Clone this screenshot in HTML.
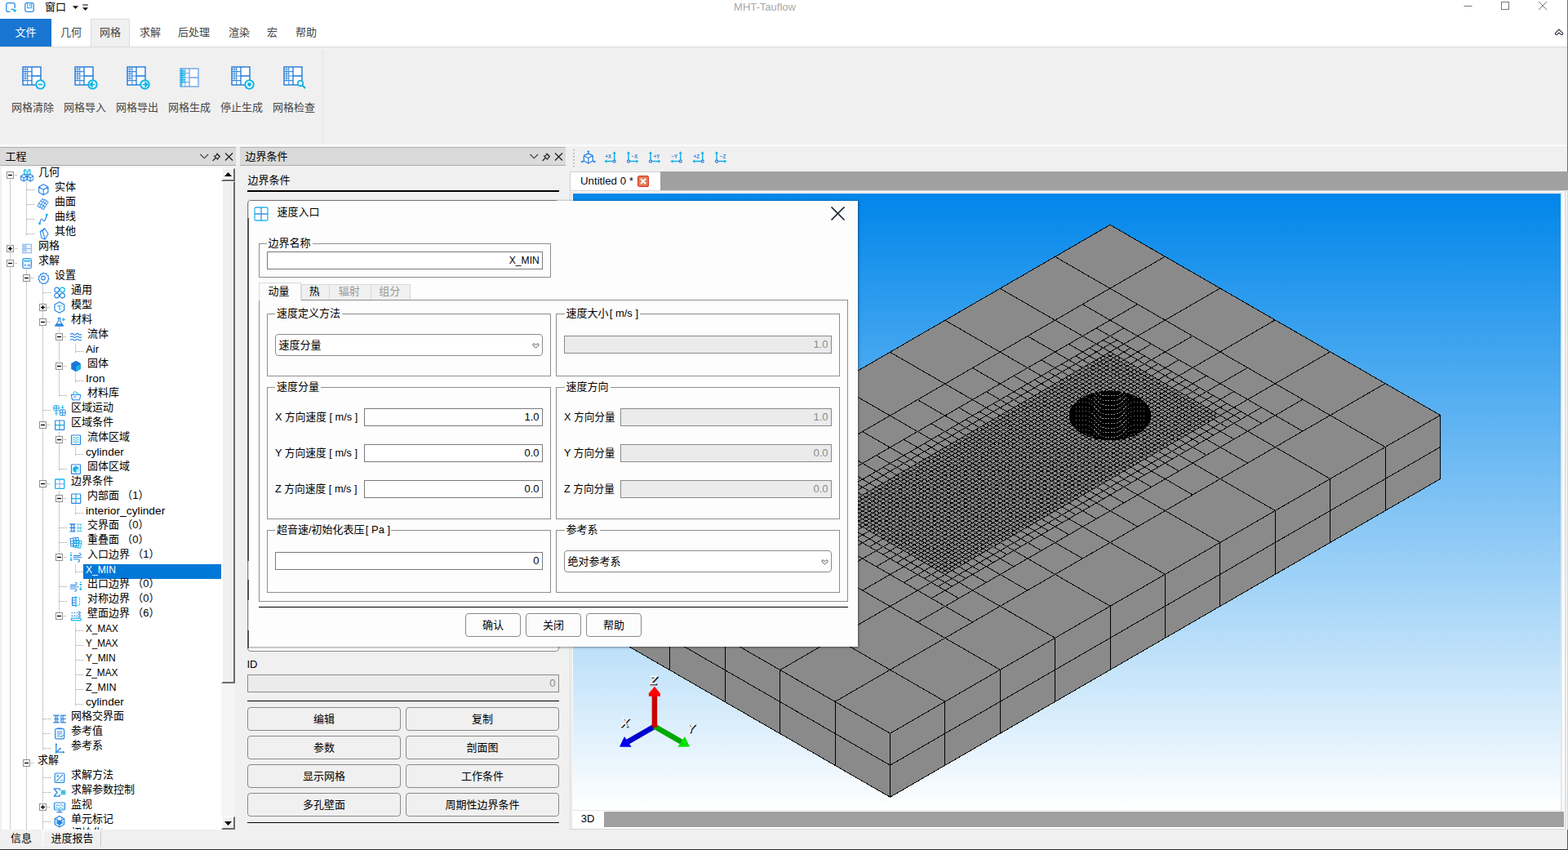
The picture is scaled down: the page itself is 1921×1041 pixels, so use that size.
<!DOCTYPE html>
<html lang="zh"><head><meta charset="utf-8"><title>MHT-Tauflow</title><style>html,body{margin:0;padding:0}body{width:1921px;height:1041px;overflow:hidden;background:#f0f0f0;font-family:"Liberation Sans","Noto Sans CJK SC",sans-serif;font-size:13px;position:relative}
div{position:absolute;box-sizing:border-box}
.sp{display:block;flex:none;width:3.3px;height:1px}.sp1{display:block;flex:none;width:1.2px;height:1px}
.t{display:flex;align-items:center;white-space:pre}
</style></head><body>
<div style="left:0px;top:181px;width:1921px;height:860px;background:#f0f0f0"></div>
<div style="left:0px;top:180px;width:289px;height:23px;background:#dadada;border-top:1px solid #b4b4b4;border-bottom:1px solid #acacac"></div>
<div class="t" style="top:181.5px;height:20px;line-height:20px;font-size:13px;color:#000;left:6.5px;">工程</div>
<svg style="position:absolute;left:244px;top:185px" width="46" height="14" viewBox="0 0 46 14"><path d="M1.5 4l4.8 4.8l4.8-4.8" fill="none" stroke="#333" stroke-width="1.1"/><path d="M16.6 12l3.8-3.8M18 5.6l5 5M19.3 6.8l2.9-3l3 3l-2.9 3M21.5 2.8l4.2 4.2" fill="none" stroke="#2a2a2a" stroke-width="1.25"/><path d="M32 2.5l9 9M41 2.5l-9 9" stroke="#222" stroke-width="1.3"/></svg>
<div class="tree" style="left:2px;top:205px;width:269px;height:811px;background:#fff"></div>
<div style="left:0px;top:203px;width:290px;height:2px;background:#f4f4f4"></div>
<div style="left:271px;top:205px;width:17px;height:811px;background:#f4f4f4"></div>
<div style="left:271px;top:206px;width:17px;height:16px;background:#f0f0f0;border-right:2px solid #6b6b6b;border-bottom:2px solid #6b6b6b;border-left:2px solid #fff;border-top:1px solid #fff"></div>
<svg style="position:absolute;left:274.5px;top:211px" width="9" height="5" viewBox="0 0 9 5"><path d="M0 5l4.5-5l4.5 5z" fill="#000"/></svg>
<div style="left:271px;top:222px;width:17px;height:615px;background:#f0f0f0;border-right:2px solid #6b6b6b;border-bottom:2px solid #6b6b6b;border-left:2px solid #fff;border-top:1px solid #fff"></div>
<div style="left:271px;top:837px;width:17px;height:163px;background:repeating-conic-gradient(#fff 0 25%,#ececec 0 50%) 0 0/2px 2px"></div>
<div style="left:271px;top:1000px;width:17px;height:16px;background:#f0f0f0;border-right:2px solid #6b6b6b;border-bottom:2px solid #6b6b6b;border-left:2px solid #fff;border-top:1px solid #fff"></div>
<svg style="position:absolute;left:274.5px;top:1006px" width="9" height="5" viewBox="0 0 9 5"><path d="M0 0l4.5 5l4.5-5z" fill="#000"/></svg>
<div style="left:12px;top:219.5px;width:1px;height:796.5px;background:repeating-linear-gradient(180deg,#9a9a9a 0 1px,transparent 1px 2px)"></div>
<div style="left:32px;top:222.5px;width:1px;height:65px;background:repeating-linear-gradient(180deg,#9a9a9a 0 1px,transparent 1px 2px)"></div>
<div style="left:32px;top:330.5px;width:1px;height:685.5px;background:repeating-linear-gradient(180deg,#9a9a9a 0 1px,transparent 1px 2px)"></div>
<div style="left:52px;top:348.5px;width:1px;height:569px;background:repeating-linear-gradient(180deg,#9a9a9a 0 1px,transparent 1px 2px)"></div>
<div style="left:52px;top:939.5px;width:1px;height:76.5px;background:repeating-linear-gradient(180deg,#9a9a9a 0 1px,transparent 1px 2px)"></div>
<div style="left:72px;top:399.5px;width:1px;height:86px;background:repeating-linear-gradient(180deg,#9a9a9a 0 1px,transparent 1px 2px)"></div>
<div style="left:72px;top:528.5px;width:1px;height:47px;background:repeating-linear-gradient(180deg,#9a9a9a 0 1px,transparent 1px 2px)"></div>
<div style="left:72px;top:600.5px;width:1px;height:155px;background:repeating-linear-gradient(180deg,#9a9a9a 0 1px,transparent 1px 2px)"></div>
<div style="left:92px;top:420.5px;width:1px;height:11px;background:repeating-linear-gradient(180deg,#9a9a9a 0 1px,transparent 1px 2px)"></div>
<div style="left:92px;top:456.5px;width:1px;height:11px;background:repeating-linear-gradient(180deg,#9a9a9a 0 1px,transparent 1px 2px)"></div>
<div style="left:92px;top:546.5px;width:1px;height:11px;background:repeating-linear-gradient(180deg,#9a9a9a 0 1px,transparent 1px 2px)"></div>
<div style="left:92px;top:618.5px;width:1px;height:11px;background:repeating-linear-gradient(180deg,#9a9a9a 0 1px,transparent 1px 2px)"></div>
<div style="left:92px;top:690.5px;width:1px;height:11px;background:repeating-linear-gradient(180deg,#9a9a9a 0 1px,transparent 1px 2px)"></div>
<div style="left:92px;top:762.5px;width:1px;height:101px;background:repeating-linear-gradient(180deg,#9a9a9a 0 1px,transparent 1px 2px)"></div>
<svg style="position:absolute;left:7.5px;top:210px" width="9" height="9" viewBox="0 0 9 9"><rect x=".5" y=".5" width="8" height="8" fill="#fff" stroke="#919191"/><path d="M2 4.5h5" stroke="#000" stroke-width="1.4"/></svg>
<div style="left:18px;top:214px;width:4px;height:1px;background:repeating-linear-gradient(90deg,#9a9a9a 0 1px,transparent 1px 2px)"></div>
<svg style="position:absolute;left:25px;top:206.5px" width="16" height="16" viewBox="0 0 16 16"><path d="M8.3 -0.7L12 1.3V5.3L8.3 7.3L4.6 5.3V1.3ZM4.6 1.3L8.3 3.3L12 1.3M8.3 3.3V7.3" fill="none" stroke="#12b4e6" stroke-width="1.1" stroke-linejoin="round" stroke-linecap="round"/><path d="M4.2 6.6L7.9 8.7V12.9L4.2 15L0.5 12.9V8.7ZM0.5 8.7L4.2 10.8L7.9 8.7M4.2 10.8V15M12.2 6.6L15.9 8.7V12.9L12.2 15L8.5 12.9V8.7ZM8.5 8.7L12.2 10.8L15.9 8.7M12.2 10.8V15" fill="none" stroke="#2a86e4" stroke-width="1.1" stroke-linejoin="round" stroke-linecap="round"/></svg>
<div class="t" style="top:201.3px;height:20px;line-height:20px;font-size:13px;color:#000;left:47px;">几何</div>
<div style="left:33px;top:232px;width:8.5px;height:1px;background:repeating-linear-gradient(90deg,#9a9a9a 0 1px,transparent 1px 2px)"></div>
<svg style="position:absolute;left:45px;top:224.5px" width="16" height="16" viewBox="0 0 16 16"><path d="M8.2 0.8L13.9 4.05V10.55L8.2 13.8L2.5 10.55V4.05ZM2.5 4.05L8.2 7.3L13.9 4.05M8.2 7.3V13.8" fill="none" stroke="#2a86e4" stroke-width="1.2" stroke-linejoin="round" stroke-linecap="round"/></svg>
<div class="t" style="top:219.3px;height:20px;line-height:20px;font-size:13px;color:#000;left:67px;">实体</div>
<div style="left:33px;top:250px;width:8.5px;height:1px;background:repeating-linear-gradient(90deg,#9a9a9a 0 1px,transparent 1px 2px)"></div>
<svg style="position:absolute;left:45px;top:242.5px" width="16" height="16" viewBox="0 0 16 16"><path d="M6.9 .8Q11.5 1.2 14.2 4.6Q10.5 8 8.3 13.9Q5.5 10.5 1.1 9.8Q2.5 4.5 6.9 .8ZM4.9 3.5Q9.5 4.2 12.1 7.6M3 6.5Q7.5 7.3 10.1 10.7M9.5 2Q6 5.5 3.6 11M12 3.2Q8.5 6.5 6.2 12.3" fill="none" stroke="#2a86e4" stroke-width="1" stroke-linejoin="round" stroke-linecap="round"/></svg>
<div class="t" style="top:237.3px;height:20px;line-height:20px;font-size:13px;color:#000;left:67px;">曲面</div>
<div style="left:33px;top:268px;width:8.5px;height:1px;background:repeating-linear-gradient(90deg,#9a9a9a 0 1px,transparent 1px 2px)"></div>
<svg style="position:absolute;left:45px;top:260.5px" width="16" height="16" viewBox="0 0 16 16"><path d="M3.5 12.8C5.5 4.5 7 7.5 8 9C9.5 11 11 8 12.3 2" fill="none" stroke="#2a86e4" stroke-width="1.2" stroke-linejoin="round" stroke-linecap="round"/><circle cx="12.3" cy="2" r="1.5" fill="#12b4e6"/><circle cx="3.5" cy="12.8" r="1.5" fill="#12b4e6"/></svg>
<div class="t" style="top:255.3px;height:20px;line-height:20px;font-size:13px;color:#000;left:67px;">曲线</div>
<div style="left:33px;top:286px;width:8.5px;height:1px;background:repeating-linear-gradient(90deg,#9a9a9a 0 1px,transparent 1px 2px)"></div>
<svg style="position:absolute;left:45px;top:278.5px" width="16" height="16" viewBox="0 0 16 16"><path d="M4.2 4.5L9.8 .8L14 7.5L10 14.2L5.8 12.5ZM4.2 4.5L7.2 3.5L10 14.2M7.2 3.5L9.8 .8" fill="none" stroke="#2a86e4" stroke-width="1.1" stroke-linejoin="round" stroke-linecap="round"/></svg>
<div class="t" style="top:273.3px;height:20px;line-height:20px;font-size:13px;color:#000;left:67px;">其他</div>
<svg style="position:absolute;left:7.5px;top:300px" width="9" height="9" viewBox="0 0 9 9"><rect x=".5" y=".5" width="8" height="8" fill="#fff" stroke="#919191"/><path d="M2 4.5h5M4.5 2v5" stroke="#000" stroke-width="1.4"/></svg>
<div style="left:18px;top:304px;width:4px;height:1px;background:repeating-linear-gradient(90deg,#9a9a9a 0 1px,transparent 1px 2px)"></div>
<svg style="position:absolute;left:25px;top:296.5px" width="16" height="16" viewBox="0 0 16 16"><rect x="2.8" y="2.2" width="10.6" height="10.6" fill="#eaf2fd" stroke="#8fb8ee" stroke-width="1.1"/><path d="M6.8 2.2v10.6M6.8 7.5h6.6M2.8 5h4M2.8 7.5h4M2.8 10h4M4.8 2.2v8" stroke="#8fb8ee" stroke-width="1" fill="none"/></svg>
<div class="t" style="top:291.3px;height:20px;line-height:20px;font-size:13px;color:#000;left:47px;">网格</div>
<svg style="position:absolute;left:7.5px;top:318px" width="9" height="9" viewBox="0 0 9 9"><rect x=".5" y=".5" width="8" height="8" fill="#fff" stroke="#919191"/><path d="M2 4.5h5" stroke="#000" stroke-width="1.4"/></svg>
<div style="left:18px;top:322px;width:4px;height:1px;background:repeating-linear-gradient(90deg,#9a9a9a 0 1px,transparent 1px 2px)"></div>
<svg style="position:absolute;left:25px;top:314.5px" width="16" height="16" viewBox="0 0 16 16"><rect x="2.9" y="1.5" width="10.4" height="12" rx="1.8" fill="none" stroke="#2a86e4" stroke-width="1.2" stroke-linejoin="round" stroke-linecap="round"/><rect x="5" y="3.7" width="6.2" height="1.6" fill="none" stroke="#12b4e6" stroke-width="1"/><path d="M4.8 8.7l2 2M6.8 8.7l-2 2M9 9h2.6M9 10.6h2.6" fill="none" stroke="#2a86e4" stroke-width="0.9" stroke-linejoin="round" stroke-linecap="round"/></svg>
<div class="t" style="top:309.3px;height:20px;line-height:20px;font-size:13px;color:#000;left:47px;">求解</div>
<svg style="position:absolute;left:27.5px;top:336px" width="9" height="9" viewBox="0 0 9 9"><rect x=".5" y=".5" width="8" height="8" fill="#fff" stroke="#919191"/><path d="M2 4.5h5" stroke="#000" stroke-width="1.4"/></svg>
<div style="left:38px;top:340px;width:4px;height:1px;background:repeating-linear-gradient(90deg,#9a9a9a 0 1px,transparent 1px 2px)"></div>
<svg style="position:absolute;left:45px;top:332.5px" width="16" height="16" viewBox="0 0 16 16"><path d="M8 .9l1.6 1.4l2.1-.4l.7 2l2 .8l-.5 2.1l1.3 1.6l-1.5 1.5l.2 2.1l-2 .6l-1 1.9l-2-.6l-1.9.9l-1.2-1.7l-2.1-.3l-.1-2.1l-1.6-1.4l1-1.9l-.6-2l1.9-.9l.6-2l2.1.2z" fill="none" stroke="#2a86e4" stroke-width="1.1" stroke-linejoin="round" stroke-linecap="round"/><circle cx="8" cy="7.4" r="2.3" fill="none" stroke="#2a86e4" stroke-width="1.1" stroke-linejoin="round" stroke-linecap="round"/></svg>
<div class="t" style="top:327.3px;height:20px;line-height:20px;font-size:13px;color:#000;left:67px;">设置</div>
<div style="left:53px;top:358px;width:8.5px;height:1px;background:repeating-linear-gradient(90deg,#9a9a9a 0 1px,transparent 1px 2px)"></div>
<svg style="position:absolute;left:65px;top:350.5px" width="16" height="16" viewBox="0 0 16 16"><circle cx="4.6" cy="4" r="2.9" fill="none" stroke="#2a86e4" stroke-width="1.2" stroke-linejoin="round" stroke-linecap="round"/><circle cx="11.4" cy="4" r="2.9" fill="none" stroke="#12b4e6" stroke-width="1.2" stroke-linejoin="round" stroke-linecap="round"/><circle cx="4.6" cy="11" r="2.9" fill="none" stroke="#2a86e4" stroke-width="1.2" stroke-linejoin="round" stroke-linecap="round"/><circle cx="11.4" cy="11" r="2.9" fill="none" stroke="#2a86e4" stroke-width="1.2" stroke-linejoin="round" stroke-linecap="round"/></svg>
<div class="t" style="top:345.3px;height:20px;line-height:20px;font-size:13px;color:#000;left:87px;">通用</div>
<svg style="position:absolute;left:47.5px;top:372px" width="9" height="9" viewBox="0 0 9 9"><rect x=".5" y=".5" width="8" height="8" fill="#fff" stroke="#919191"/><path d="M2 4.5h5M4.5 2v5" stroke="#000" stroke-width="1.4"/></svg>
<div style="left:58px;top:376px;width:4px;height:1px;background:repeating-linear-gradient(90deg,#9a9a9a 0 1px,transparent 1px 2px)"></div>
<svg style="position:absolute;left:65px;top:368.5px" width="16" height="16" viewBox="0 0 16 16"><path d="M7.8 0.7L13.6 4.1V10.9L7.8 14.3L2 10.9V4.1Z" fill="none" stroke="#2a86e4" stroke-width="1.2" stroke-linejoin="round" stroke-linecap="round"/><path d="M5.6 5.8h4.6M7.8 5.8v3.2q0 1.2 1.5 1" fill="none" stroke="#12b4e6" stroke-width="1.1" stroke-linejoin="round" stroke-linecap="round"/></svg>
<div class="t" style="top:363.3px;height:20px;line-height:20px;font-size:13px;color:#000;left:87px;">模型</div>
<svg style="position:absolute;left:47.5px;top:390px" width="9" height="9" viewBox="0 0 9 9"><rect x=".5" y=".5" width="8" height="8" fill="#fff" stroke="#919191"/><path d="M2 4.5h5" stroke="#000" stroke-width="1.4"/></svg>
<div style="left:58px;top:394px;width:4px;height:1px;background:repeating-linear-gradient(90deg,#9a9a9a 0 1px,transparent 1px 2px)"></div>
<svg style="position:absolute;left:65px;top:386.5px" width="16" height="16" viewBox="0 0 16 16"><path d="M6 2.6h3.2M6.6 2.6v3.6L2.6 12h10l-4-5.8v-3.6" fill="none" stroke="#2a86e4" stroke-width="1.1" stroke-linejoin="round" stroke-linecap="round"/><path d="M4.2 9.8h6.8l1.6 2.3h-10z" fill="#2a86e4" stroke="#2a86e4" stroke-width=".8"/><path d="M12.8 2.5v3.4M11.1 4.2h3.4" fill="none" stroke="#12b4e6" stroke-width="1.1" stroke-linejoin="round" stroke-linecap="round"/></svg>
<div class="t" style="top:381.3px;height:20px;line-height:20px;font-size:13px;color:#000;left:87px;">材料</div>
<svg style="position:absolute;left:67.5px;top:408px" width="9" height="9" viewBox="0 0 9 9"><rect x=".5" y=".5" width="8" height="8" fill="#fff" stroke="#919191"/><path d="M2 4.5h5" stroke="#000" stroke-width="1.4"/></svg>
<div style="left:78px;top:412px;width:4px;height:1px;background:repeating-linear-gradient(90deg,#9a9a9a 0 1px,transparent 1px 2px)"></div>
<svg style="position:absolute;left:85px;top:404.5px" width="16" height="16" viewBox="0 0 16 16"><path d="M1.5 4.3q1.7-1.7 3.3 0t3.3 0t3.3 0t3.3 0" fill="none" stroke="#2a86e4" stroke-width="1.2" stroke-linejoin="round" stroke-linecap="round"/><path d="M1.5 7.7q1.7-1.7 3.3 0t3.3 0t3.3 0t3.3 0" fill="none" stroke="#2a86e4" stroke-width="1.2" stroke-linejoin="round" stroke-linecap="round"/><path d="M1.5 11.1q1.7-1.7 3.3 0t3.3 0t3.3 0t3.3 0" fill="none" stroke="#2a86e4" stroke-width="1.2" stroke-linejoin="round" stroke-linecap="round"/></svg>
<div class="t" style="top:399.3px;height:20px;line-height:20px;font-size:13px;color:#000;left:107px;">流体</div>
<div style="left:93px;top:430px;width:9px;height:1px;background:repeating-linear-gradient(90deg,#9a9a9a 0 1px,transparent 1px 2px)"></div>
<div class="t" style="top:417.7px;height:20px;line-height:20px;font-size:13px;color:#000;left:105.2px;transform:scaleX(1);transform-origin:0 50%;">Air</div>
<svg style="position:absolute;left:67.5px;top:444px" width="9" height="9" viewBox="0 0 9 9"><rect x=".5" y=".5" width="8" height="8" fill="#fff" stroke="#919191"/><path d="M2 4.5h5" stroke="#000" stroke-width="1.4"/></svg>
<div style="left:78px;top:448px;width:4px;height:1px;background:repeating-linear-gradient(90deg,#9a9a9a 0 1px,transparent 1px 2px)"></div>
<svg style="position:absolute;left:85px;top:440.5px" width="16" height="16" viewBox="0 0 16 16"><path d="M8 0.7L13.8 4.1V10.9L8 14.3L2.2 10.9V4.1Z" fill="#1976dc"/><path d="M8.2 8l5.3-3v6.3l-5.3 3.1z" fill="#1ab2e8"/></svg>
<div class="t" style="top:435.3px;height:20px;line-height:20px;font-size:13px;color:#000;left:107px;">固体</div>
<div style="left:93px;top:466px;width:9px;height:1px;background:repeating-linear-gradient(90deg,#9a9a9a 0 1px,transparent 1px 2px)"></div>
<div class="t" style="top:453.7px;height:20px;line-height:20px;font-size:13px;color:#000;left:105.2px;transform:scaleX(1.05);transform-origin:0 50%;">Iron</div>
<div style="left:73px;top:484px;width:8.5px;height:1px;background:repeating-linear-gradient(90deg,#9a9a9a 0 1px,transparent 1px 2px)"></div>
<svg style="position:absolute;left:85px;top:476.5px" width="16" height="16" viewBox="0 0 16 16"><path d="M2.3 6.5h11.5l-1.3 6.3h-8.9z" fill="none" stroke="#2a86e4" stroke-width="1.1" stroke-linejoin="round" stroke-linecap="round"/><path d="M5 6.5q-1-3.5 1.5-4q2 0 2.5 2M9 4.5q1.5-1.5 3 2" fill="none" stroke="#12b4e6" stroke-width="1" stroke-linejoin="round" stroke-linecap="round"/><path d="M5.5 9h2.5" fill="none" stroke="#2a86e4" stroke-width="1" stroke-linejoin="round" stroke-linecap="round"/></svg>
<div class="t" style="top:471.3px;height:20px;line-height:20px;font-size:13px;color:#000;left:107px;">材料库</div>
<div style="left:53px;top:502px;width:8.5px;height:1px;background:repeating-linear-gradient(90deg,#9a9a9a 0 1px,transparent 1px 2px)"></div>
<svg style="position:absolute;left:65px;top:494.5px" width="16" height="16" viewBox="0 0 16 16"><rect x=".9" y="1.8" width="6.2" height="6.2" rx=".8" fill="none" stroke="#12b4e6" stroke-width="1" stroke-linejoin="round" stroke-linecap="round"/><path d="M4 1.8v6.2M.9 4.9h6.2" fill="none" stroke="#2a86e4" stroke-width="1" stroke-linejoin="round" stroke-linecap="round"/><rect x="8.4" y="7" width="6.6" height="6.6" rx=".8" fill="none" stroke="#2a86e4" stroke-width="1" stroke-linejoin="round" stroke-linecap="round"/><path d="M11.7 7v6.6M8.4 10.3h6.6" fill="none" stroke="#2a86e4" stroke-width="1" stroke-linejoin="round" stroke-linecap="round"/><path d="M11.7 1.5v3.5M10.3 3.7l1.4 1.4l1.4-1.4M4 13.5v-3.5M2.6 11.3l1.4-1.4l1.4 1.4" fill="none" stroke="#12b4e6" stroke-width="1" stroke-linejoin="round" stroke-linecap="round"/></svg>
<div class="t" style="top:489.3px;height:20px;line-height:20px;font-size:13px;color:#000;left:87px;">区域运动</div>
<svg style="position:absolute;left:47.5px;top:516px" width="9" height="9" viewBox="0 0 9 9"><rect x=".5" y=".5" width="8" height="8" fill="#fff" stroke="#919191"/><path d="M2 4.5h5" stroke="#000" stroke-width="1.4"/></svg>
<div style="left:58px;top:520px;width:4px;height:1px;background:repeating-linear-gradient(90deg,#9a9a9a 0 1px,transparent 1px 2px)"></div>
<svg style="position:absolute;left:65px;top:512.5px" width="16" height="16" viewBox="0 0 16 16"><path d="M8 2v11.4M2.5 7.7h11" fill="none" stroke="#12b4e6" stroke-width="1.2" stroke-linejoin="round" stroke-linecap="round"/><rect x="2.7" y="2" width="11" height="11.4" rx=".6" fill="none" stroke="#2a86e4" stroke-width="1.2" stroke-linejoin="round" stroke-linecap="round"/></svg>
<div class="t" style="top:507.3px;height:20px;line-height:20px;font-size:13px;color:#000;left:87px;">区域条件</div>
<svg style="position:absolute;left:67.5px;top:534px" width="9" height="9" viewBox="0 0 9 9"><rect x=".5" y=".5" width="8" height="8" fill="#fff" stroke="#919191"/><path d="M2 4.5h5" stroke="#000" stroke-width="1.4"/></svg>
<div style="left:78px;top:538px;width:4px;height:1px;background:repeating-linear-gradient(90deg,#9a9a9a 0 1px,transparent 1px 2px)"></div>
<svg style="position:absolute;left:85px;top:530.5px" width="16" height="16" viewBox="0 0 16 16"><rect x="2.5" y="2" width="11" height="11.4" rx=".6" fill="none" stroke="#2a86e4" stroke-width="1.2" stroke-linejoin="round" stroke-linecap="round"/><path d="M4.3 5.2q1.2-1.3 2.4 0t2.4 0t2.4 0" fill="none" stroke="#12b4e6" stroke-width="1" stroke-linejoin="round" stroke-linecap="round"/><path d="M4.3 7.8q1.2-1.3 2.4 0t2.4 0t2.4 0" fill="none" stroke="#12b4e6" stroke-width="1" stroke-linejoin="round" stroke-linecap="round"/><path d="M4.3 10.4q1.2-1.3 2.4 0t2.4 0t2.4 0" fill="none" stroke="#12b4e6" stroke-width="1" stroke-linejoin="round" stroke-linecap="round"/></svg>
<div class="t" style="top:525.3px;height:20px;line-height:20px;font-size:13px;color:#000;left:107px;">流体区域</div>
<div style="left:93px;top:556px;width:9px;height:1px;background:repeating-linear-gradient(90deg,#9a9a9a 0 1px,transparent 1px 2px)"></div>
<div class="t" style="top:543.7px;height:20px;line-height:20px;font-size:13px;color:#000;left:105.2px;transform:scaleX(1.045);transform-origin:0 50%;">cylinder</div>
<div style="left:73px;top:574px;width:8.5px;height:1px;background:repeating-linear-gradient(90deg,#9a9a9a 0 1px,transparent 1px 2px)"></div>
<svg style="position:absolute;left:85px;top:566.5px" width="16" height="16" viewBox="0 0 16 16"><rect x="2.5" y="2" width="11" height="11.4" rx=".6" fill="none" stroke="#2a86e4" stroke-width="1.2" stroke-linejoin="round" stroke-linecap="round"/><path d="M8 3.6L11.6 5.7V9.9L8 12L4.4 9.9V5.7Z" fill="#12b4e6"/><path d="M8.3 8.2l3-1.7v3.5l-3 1.8z" fill="#fff" opacity=".75"/></svg>
<div class="t" style="top:561.3px;height:20px;line-height:20px;font-size:13px;color:#000;left:107px;">固体区域</div>
<svg style="position:absolute;left:47.5px;top:588px" width="9" height="9" viewBox="0 0 9 9"><rect x=".5" y=".5" width="8" height="8" fill="#fff" stroke="#919191"/><path d="M2 4.5h5" stroke="#000" stroke-width="1.4"/></svg>
<div style="left:58px;top:592px;width:4px;height:1px;background:repeating-linear-gradient(90deg,#9a9a9a 0 1px,transparent 1px 2px)"></div>
<svg style="position:absolute;left:65px;top:584.5px" width="16" height="16" viewBox="0 0 16 16"><path d="M8 2v11.4M2.5 7.7h11" fill="none" stroke="#9db4ee" stroke-width="1.2" stroke-linejoin="round" stroke-linecap="round"/><rect x="2.7" y="2" width="11" height="11.4" rx=".6" fill="none" stroke="#19b4ee" stroke-width="1.3" stroke-linejoin="round" stroke-linecap="round"/></svg>
<div class="t" style="top:579.3px;height:20px;line-height:20px;font-size:13px;color:#000;left:87px;">边界条件</div>
<svg style="position:absolute;left:67.5px;top:606px" width="9" height="9" viewBox="0 0 9 9"><rect x=".5" y=".5" width="8" height="8" fill="#fff" stroke="#919191"/><path d="M2 4.5h5" stroke="#000" stroke-width="1.4"/></svg>
<div style="left:78px;top:610px;width:4px;height:1px;background:repeating-linear-gradient(90deg,#9a9a9a 0 1px,transparent 1px 2px)"></div>
<svg style="position:absolute;left:85px;top:602.5px" width="16" height="16" viewBox="0 0 16 16"><path d="M8 2v11.4M2.5 7.7h11" fill="none" stroke="#12b4e6" stroke-width="1.2" stroke-linejoin="round" stroke-linecap="round"/><rect x="2.7" y="2" width="11" height="11.4" rx=".6" fill="none" stroke="#2a86e4" stroke-width="1.2" stroke-linejoin="round" stroke-linecap="round"/></svg>
<div class="t" style="top:597.3px;height:20px;line-height:20px;font-size:13px;color:#000;left:107px;">内部面<i class="sp"></i>（1）</div>
<div style="left:93px;top:628px;width:9px;height:1px;background:repeating-linear-gradient(90deg,#9a9a9a 0 1px,transparent 1px 2px)"></div>
<div class="t" style="top:615.7px;height:20px;line-height:20px;font-size:13px;color:#000;left:105.2px;transform:scaleX(1.06);transform-origin:0 50%;">interior_cylinder</div>
<div style="left:73px;top:646px;width:8.5px;height:1px;background:repeating-linear-gradient(90deg,#9a9a9a 0 1px,transparent 1px 2px)"></div>
<svg style="position:absolute;left:85px;top:638.5px" width="16" height="16" viewBox="0 0 16 16"><path d="M.8 3h6.2M.8 7.4h6.2M.8 11.8h6.2M2.8 3v8.8M5.6 3v8.8" fill="none" stroke="#2a86e4" stroke-width="1.3" stroke-linejoin="round" stroke-linecap="round"/><path d="M9.5 3h6M9.5 7.4h6M9.5 11.8h6M10.8 3v8.8M13.6 3v8.8" fill="none" stroke="#12b4e6" stroke-width="1.2" stroke-dasharray="1.2 1.2"/></svg>
<div class="t" style="top:633.3px;height:20px;line-height:20px;font-size:13px;color:#000;left:107px;">交界面<i class="sp"></i>（0）</div>
<div style="left:73px;top:664px;width:8.5px;height:1px;background:repeating-linear-gradient(90deg,#9a9a9a 0 1px,transparent 1px 2px)"></div>
<svg style="position:absolute;left:85px;top:656.5px" width="16" height="16" viewBox="0 0 16 16"><path d="M1.5 2.5l9.5-1.2l.8 10l-9.5.8zM4.8 2l.5 10M8 1.6l.6 10.2M1.8 5.8l9.5-.9M2 9l9.6-.8" fill="none" stroke="#2a86e4" stroke-width="1" stroke-linejoin="round" stroke-linecap="round"/><path d="M6 4.5l9.2 1.3l-1.8 8.5l-8.8-1.5zM5.5 7.5l9 1.4M9.2 5l-1.5 8.5M12.3 5.5l-1.6 8.5" fill="none" stroke="#12b4e6" stroke-width="1" stroke-linejoin="round" stroke-linecap="round"/></svg>
<div class="t" style="top:651.3px;height:20px;line-height:20px;font-size:13px;color:#000;left:107px;">重叠面<i class="sp"></i>（0）</div>
<svg style="position:absolute;left:67.5px;top:678px" width="9" height="9" viewBox="0 0 9 9"><rect x=".5" y=".5" width="8" height="8" fill="#fff" stroke="#919191"/><path d="M2 4.5h5" stroke="#000" stroke-width="1.4"/></svg>
<div style="left:78px;top:682px;width:4px;height:1px;background:repeating-linear-gradient(90deg,#9a9a9a 0 1px,transparent 1px 2px)"></div>
<svg style="position:absolute;left:85px;top:674.5px" width="16" height="16" viewBox="0 0 16 16"><path d="M2 1.5v12" fill="none" stroke="#12b4e6" stroke-width="1.4" stroke-dasharray="1.6 1.4"/><path d="M1 4.8h2.5M1 10.2h2.5" stroke="#12b4e6" stroke-width="1.6"/><path d="M5.5 5.6h6.5q2 0 2-1.6t-1.8-1.5M4.8 7.8h10.2M5.5 10h5q2 0 2 1.6t-1.8 1.5" fill="none" stroke="#2a86e4" stroke-width="1.1" stroke-linejoin="round" stroke-linecap="round"/></svg>
<div class="t" style="top:669.3px;height:20px;line-height:20px;font-size:13px;color:#000;left:107px;">入口边界<i class="sp"></i>（1）</div>
<div style="left:93px;top:700px;width:9px;height:1px;background:repeating-linear-gradient(90deg,#9a9a9a 0 1px,transparent 1px 2px)"></div>
<div style="left:102px;top:691px;width:169px;height:17.7px;background:#0078d7"></div>
<div class="t" style="top:687.7px;height:20px;line-height:20px;font-size:13px;color:#fff;left:105.2px;transform:scaleX(0.93);transform-origin:0 50%;">X_MIN</div>
<div style="left:73px;top:718px;width:8.5px;height:1px;background:repeating-linear-gradient(90deg,#9a9a9a 0 1px,transparent 1px 2px)"></div>
<svg style="position:absolute;left:85px;top:710.5px" width="16" height="16" viewBox="0 0 16 16"><path d="M14 1.5v12" fill="none" stroke="#12b4e6" stroke-width="1.4" stroke-dasharray="1.6 1.4"/><path d="M12.5 4.8h2.5M12.5 10.2h2.5" stroke="#12b4e6" stroke-width="1.6"/><path d="M1.5 5.6h5.5q2 0 2-1.6t-1.8-1.5M.8 7.8h10.2M1.5 10h5q2 0 2 1.6t-1.8 1.5" fill="none" stroke="#2a86e4" stroke-width="1.1" stroke-linejoin="round" stroke-linecap="round"/></svg>
<div class="t" style="top:705.3px;height:20px;line-height:20px;font-size:13px;color:#000;left:107px;">出口边界<i class="sp"></i>（0）</div>
<div style="left:73px;top:736px;width:8.5px;height:1px;background:repeating-linear-gradient(90deg,#9a9a9a 0 1px,transparent 1px 2px)"></div>
<svg style="position:absolute;left:85px;top:728.5px" width="16" height="16" viewBox="0 0 16 16"><path d="M8 2.8h-4.5v9.5h4.5M3.5 6h4.5M3.5 9.2h4.5" fill="none" stroke="#2a86e4" stroke-width="1.2" stroke-linejoin="round" stroke-linecap="round"/><path d="M8 1.5v12.5" fill="none" stroke="#12b4e6" stroke-width="1.1" stroke-linejoin="round" stroke-linecap="round"/><path d="M8 2.8h4.5v9.5h-4.5" fill="none" stroke="#12b4e6" stroke-width="1.1" stroke-dasharray="1.5 1.3"/></svg>
<div class="t" style="top:723.3px;height:20px;line-height:20px;font-size:13px;color:#000;left:107px;">对称边界<i class="sp"></i>（0）</div>
<svg style="position:absolute;left:67.5px;top:750px" width="9" height="9" viewBox="0 0 9 9"><rect x=".5" y=".5" width="8" height="8" fill="#fff" stroke="#919191"/><path d="M2 4.5h5" stroke="#000" stroke-width="1.4"/></svg>
<div style="left:78px;top:754px;width:4px;height:1px;background:repeating-linear-gradient(90deg,#9a9a9a 0 1px,transparent 1px 2px)"></div>
<svg style="position:absolute;left:85px;top:746.5px" width="16" height="16" viewBox="0 0 16 16"><path d="M2.5 3.5h9M2.5 7.3h9" fill="none" stroke="#2a86e4" stroke-width="1.2" stroke-dasharray="1.8 1.2"/><path d="M11.5 1.8l2 1.7l-2 1.7M11.5 5.6l2 1.7l-2 1.7" fill="none" stroke="#2a86e4" stroke-width="1.1" stroke-linejoin="round" stroke-linecap="round"/><rect x="2.5" y="10.2" width="11.5" height="2.6" fill="none" stroke="#19b4ee" stroke-width="1.2" stroke-linejoin="round" stroke-linecap="round"/></svg>
<div class="t" style="top:741.3px;height:20px;line-height:20px;font-size:13px;color:#000;left:107px;">壁面边界<i class="sp"></i>（6）</div>
<div style="left:93px;top:772px;width:9px;height:1px;background:repeating-linear-gradient(90deg,#9a9a9a 0 1px,transparent 1px 2px)"></div>
<div class="t" style="top:759.7px;height:20px;line-height:20px;font-size:13px;color:#000;left:105.2px;transform:scaleX(0.905);transform-origin:0 50%;">X_MAX</div>
<div style="left:93px;top:790px;width:9px;height:1px;background:repeating-linear-gradient(90deg,#9a9a9a 0 1px,transparent 1px 2px)"></div>
<div class="t" style="top:777.7px;height:20px;line-height:20px;font-size:13px;color:#000;left:105.2px;transform:scaleX(0.9);transform-origin:0 50%;">Y_MAX</div>
<div style="left:93px;top:808px;width:9px;height:1px;background:repeating-linear-gradient(90deg,#9a9a9a 0 1px,transparent 1px 2px)"></div>
<div class="t" style="top:795.7px;height:20px;line-height:20px;font-size:13px;color:#000;left:105.2px;transform:scaleX(0.92);transform-origin:0 50%;">Y_MIN</div>
<div style="left:93px;top:826px;width:9px;height:1px;background:repeating-linear-gradient(90deg,#9a9a9a 0 1px,transparent 1px 2px)"></div>
<div class="t" style="top:813.7px;height:20px;line-height:20px;font-size:13px;color:#000;left:105.2px;transform:scaleX(0.91);transform-origin:0 50%;">Z_MAX</div>
<div style="left:93px;top:844px;width:9px;height:1px;background:repeating-linear-gradient(90deg,#9a9a9a 0 1px,transparent 1px 2px)"></div>
<div class="t" style="top:831.7px;height:20px;line-height:20px;font-size:13px;color:#000;left:105.2px;transform:scaleX(0.96);transform-origin:0 50%;">Z_MIN</div>
<div style="left:93px;top:862px;width:9px;height:1px;background:repeating-linear-gradient(90deg,#9a9a9a 0 1px,transparent 1px 2px)"></div>
<div class="t" style="top:849.7px;height:20px;line-height:20px;font-size:13px;color:#000;left:105.2px;transform:scaleX(1.045);transform-origin:0 50%;">cylinder</div>
<div style="left:53px;top:880px;width:8.5px;height:1px;background:repeating-linear-gradient(90deg,#9a9a9a 0 1px,transparent 1px 2px)"></div>
<svg style="position:absolute;left:65px;top:872.5px" width="16" height="16" viewBox="0 0 16 16"><path d="M.5 3.2h7M.5 11.8h7M1.8 7.5h5M3 3.2v8.6M5.2 3.2v8.6M9.8 3.2v8.6M9.8 3.2h6M9.8 7.5h5.5M9.8 11.8h6M12.2 3.2v8.6" fill="none" stroke="#2a86e4" stroke-width="1.2" stroke-linejoin="round" stroke-linecap="round"/></svg>
<div class="t" style="top:867.3px;height:20px;line-height:20px;font-size:13px;color:#000;left:87px;">网格交界面</div>
<div style="left:53px;top:898px;width:8.5px;height:1px;background:repeating-linear-gradient(90deg,#9a9a9a 0 1px,transparent 1px 2px)"></div>
<svg style="position:absolute;left:65px;top:890.5px" width="16" height="16" viewBox="0 0 16 16"><rect x="2.6" y="1.6" width="11" height="12.2" rx="1.6" fill="none" stroke="#2a86e4" stroke-width="1.2" stroke-linejoin="round" stroke-linecap="round"/><path d="M5.5 1.2h5.2" stroke="#2a86e4" stroke-width="1.6"/><path d="M5 5.3h6M5 7.8h6M5 10.3h2.5" fill="none" stroke="#2a86e4" stroke-width="1" stroke-linejoin="round" stroke-linecap="round"/><path d="M8.8 10.4l1.3 1.3l2.2-2.4" fill="none" stroke="#12b4e6" stroke-width="1.1" stroke-linejoin="round" stroke-linecap="round"/></svg>
<div class="t" style="top:885.3px;height:20px;line-height:20px;font-size:13px;color:#000;left:87px;">参考值</div>
<div style="left:53px;top:916px;width:8.5px;height:1px;background:repeating-linear-gradient(90deg,#9a9a9a 0 1px,transparent 1px 2px)"></div>
<svg style="position:absolute;left:65px;top:908.5px" width="16" height="16" viewBox="0 0 16 16"><path d="M3.8 2v10.2h9.5M3.8 12.2l5-4.5" fill="none" stroke="#2a86e4" stroke-width="1.2" stroke-linejoin="round" stroke-linecap="round"/><path d="M2.3 3.6l1.5-2.3l1.5 2.3zM12 10.7l2.3 1.5l-2.3 1.5z" fill="#2a86e4"/><circle cx="8.8" cy="7.7" r="1" fill="#2a86e4"/><circle cx="3.8" cy="12.2" r="1.3" fill="#12b4e6"/></svg>
<div class="t" style="top:903.3px;height:20px;line-height:20px;font-size:13px;color:#000;left:87px;">参考系</div>
<svg style="position:absolute;left:27.5px;top:930px" width="9" height="9" viewBox="0 0 9 9"><rect x=".5" y=".5" width="8" height="8" fill="#fff" stroke="#919191"/><path d="M2 4.5h5" stroke="#000" stroke-width="1.4"/></svg>
<div style="left:38px;top:934px;width:4px;height:1px;background:repeating-linear-gradient(90deg,#9a9a9a 0 1px,transparent 1px 2px)"></div>
<div class="t" style="top:921.3px;height:20px;line-height:20px;font-size:13px;color:#000;left:46px;">求解</div>
<div style="left:53px;top:952px;width:8.5px;height:1px;background:repeating-linear-gradient(90deg,#9a9a9a 0 1px,transparent 1px 2px)"></div>
<svg style="position:absolute;left:65px;top:944.5px" width="16" height="16" viewBox="0 0 16 16"><rect x="2.2" y="2" width="11.6" height="11.4" rx="1.3" fill="none" stroke="#2a86e4" stroke-width="1.2" stroke-linejoin="round" stroke-linecap="round"/><path d="M4.5 11.3l7-7.2" fill="none" stroke="#2a86e4" stroke-width="1.1" stroke-linejoin="round" stroke-linecap="round"/><path d="M4.3 5.3h2.8M5.7 3.9v2.8M9.2 10.6h2.8" fill="none" stroke="#12b4e6" stroke-width="1" stroke-linejoin="round" stroke-linecap="round"/></svg>
<div class="t" style="top:939.3px;height:20px;line-height:20px;font-size:13px;color:#000;left:87px;">求解方法</div>
<div style="left:53px;top:970px;width:8.5px;height:1px;background:repeating-linear-gradient(90deg,#9a9a9a 0 1px,transparent 1px 2px)"></div>
<svg style="position:absolute;left:65px;top:962.5px" width="16" height="16" viewBox="0 0 16 16"><path d="M8.2 4.3v-1.4h-7l3.8 4.6l-3.8 4.6h7v-1.4" fill="none" stroke="#2a86e4" stroke-width="1.4" stroke-linejoin="round" stroke-linecap="round"/><path d="M10.2 5.2h4.6v4.6h-4.6zM12.5 5.2v4.6M10.2 7.5h4.6" fill="#bfeaf9" stroke="#12b4e6" stroke-width="1.1"/></svg>
<div class="t" style="top:957.3px;height:20px;line-height:20px;font-size:13px;color:#000;left:87px;">求解参数控制</div>
<svg style="position:absolute;left:47.5px;top:984px" width="9" height="9" viewBox="0 0 9 9"><rect x=".5" y=".5" width="8" height="8" fill="#fff" stroke="#919191"/><path d="M2 4.5h5M4.5 2v5" stroke="#000" stroke-width="1.4"/></svg>
<div style="left:58px;top:988px;width:4px;height:1px;background:repeating-linear-gradient(90deg,#9a9a9a 0 1px,transparent 1px 2px)"></div>
<svg style="position:absolute;left:65px;top:980.5px" width="16" height="16" viewBox="0 0 16 16"><rect x="1.5" y="2" width="13" height="9" rx="1.5" fill="none" stroke="#2a86e4" stroke-width="1.2" stroke-linejoin="round" stroke-linecap="round"/><path d="M5 13.6h6M8 11v2.6" fill="none" stroke="#2a86e4" stroke-width="1.2" stroke-linejoin="round" stroke-linecap="round"/><path d="M3 6.5l2.2-2l2 1.8l2.3-2l3.3 2.5" fill="none" stroke="#2a86e4" stroke-width="0.9" stroke-linejoin="round" stroke-linecap="round"/><path d="M3 8.8q1.3-1.3 2.5 0t2.5 0t2.5 0t2.5 0" fill="none" stroke="#12b4e6" stroke-width="1" stroke-linejoin="round" stroke-linecap="round"/></svg>
<div class="t" style="top:975.3px;height:20px;line-height:20px;font-size:13px;color:#000;left:87px;">监视</div>
<div style="left:53px;top:1006px;width:8.5px;height:1px;background:repeating-linear-gradient(90deg,#9a9a9a 0 1px,transparent 1px 2px)"></div>
<svg style="position:absolute;left:65px;top:998.5px" width="16" height="16" viewBox="0 0 16 16"><path d="M7.9 0.4L13.8 3.8V10.6L7.9 14L2 10.6V3.8ZM2 3.8L7.9 7.2L13.8 3.8M7.9 7.2V14" fill="none" stroke="#2a86e4" stroke-width="1.1" stroke-linejoin="round" stroke-linecap="round"/><path d="M7.9 5.1L10.7 6.75V10.05L7.9 11.7L5.1 10.05V6.75Z" fill="#1a8de6"/><path d="M2.5 7.2l5.4 3.1l5.4-3.1M5.2 2.3v6.4l-2.7 1.5M10.6 2.3v6.4l2.7 1.5" fill="none" stroke="#2a86e4" stroke-width="0.7" stroke-linejoin="round" stroke-linecap="round"/></svg>
<div class="t" style="top:993.3px;height:20px;line-height:20px;font-size:13px;color:#000;left:87px;">单元标记</div>
<div style="left:53px;top:1022.5px;width:8.5px;height:1px;background:repeating-linear-gradient(90deg,#9a9a9a 0 1px,transparent 1px 2px)"></div>
<svg style="position:absolute;left:65px;top:1015px" width="16" height="16" viewBox="0 0 16 16"><rect x="2" y="2" width="12" height="12" rx="1.5" fill="none" stroke="#2a86e4" stroke-width="1.2" stroke-linejoin="round" stroke-linecap="round"/></svg>
<div class="t" style="top:1009.8px;height:20px;line-height:20px;font-size:13px;color:#000;left:87px;">初始化</div>
<div style="left:0px;top:1016px;width:1921px;height:25px;background:#f0f0f0"></div>
<div style="left:0px;top:1017px;width:53px;height:20px;background:#f0f0f0;border-right:1px solid #fff"></div>
<div style="left:53px;top:1017px;width:71px;height:20px;background:#f0f0f0;border-top:1px solid #fff;border-right:1px solid #c8c8c8"></div>
<div class="t" style="top:1016.5px;height:20px;line-height:20px;font-size:13px;color:#000;left:-174px;width:400px;justify-content:center;">信息</div>
<div class="t" style="top:1016.5px;height:20px;line-height:20px;font-size:13px;color:#000;left:-111.5px;width:400px;justify-content:center;">进度报告</div>
<div style="left:0px;top:1039.5px;width:1921px;height:1.5px;background:#2b2b2b"></div>
<div style="left:0px;top:0px;width:1921px;height:23px;background:#fff"></div>
<svg style="position:absolute;left:0;top:0" width="50" height="18" viewBox="0 0 50 18"><path d="M12.6 14.3H9.8a2 2 0 0 1-2-2V5.7a2 2 0 0 1 2-2h6.4a2 2 0 0 1 2 2V10" fill="none" stroke="#2a8be8" stroke-width="1.3"/><path d="M13.3 11.3h3.2q1.7 0 1.7 1.6M16.3 12.3l1.9 1.8l1.7-1.9" fill="none" stroke="#12b4e6" stroke-width="1.3"/><rect x="30.8" y="3.7" width="10.4" height="10.6" rx="1.8" fill="none" stroke="#2a8be8" stroke-width="1.3"/><path d="M33.6 3.9v5.7h5V3.9" fill="none" stroke="#2fc0ee" stroke-width="1.2"/><path d="M36.7 5.3v2.2" stroke="#2a8be8" stroke-width="1.2"/></svg>
<div class="t" style="top:-1.5px;height:20px;line-height:20px;font-size:13px;color:#000;left:55px;">窗口</div>
<svg style="position:absolute;left:90px;top:4px;overflow:visible" width="22" height="10" viewBox="0 0 22 10"><path d="M-1 3.2h7l-3.5 3.8z" fill="#111"/><path d="M11.2 2h6.6" stroke="#222" stroke-width="1.2"/><path d="M11 5.3h7l-3.5 3.8z" fill="#111"/></svg>
<div class="t" style="top:-1.5px;height:20px;line-height:20px;font-size:13px;color:#a9a9a9;left:737px;width:400px;justify-content:center;">MHT-Tauflow</div>
<svg style="position:absolute;left:1788px;top:0" width="112" height="16" viewBox="0 0 112 16"><path d="M5.5 7.5h10" stroke="#777" stroke-width="1"/><rect x="51.5" y="2.5" width="9" height="9" fill="none" stroke="#777" stroke-width="1"/><path d="M97 2l10 10M107 2l-10 10" stroke="#777" stroke-width="1"/></svg>
<div style="left:0px;top:23px;width:1921px;height:35px;background:#fff"></div>
<div style="left:0px;top:23px;width:63px;height:35px;background:#1976d2"></div>
<div class="t" style="top:30px;height:20px;line-height:20px;font-size:13px;color:#fff;left:-168.5px;width:400px;justify-content:center;">文件</div>
<div style="left:111px;top:23px;width:48px;height:36px;background:#f0f0f0;border:1px solid #dcdcdc;border-bottom:none"></div>
<div class="t" style="top:30px;height:20px;line-height:20px;font-size:13px;color:#444;left:-113px;width:400px;justify-content:center;">几何</div>
<div class="t" style="top:30px;height:20px;line-height:20px;font-size:13px;color:#444;left:-65px;width:400px;justify-content:center;">网格</div>
<div class="t" style="top:30px;height:20px;line-height:20px;font-size:13px;color:#444;left:-16px;width:400px;justify-content:center;">求解</div>
<div class="t" style="top:30px;height:20px;line-height:20px;font-size:13px;color:#444;left:37.5px;width:400px;justify-content:center;">后处理</div>
<div class="t" style="top:30px;height:20px;line-height:20px;font-size:13px;color:#444;left:93px;width:400px;justify-content:center;">渲染</div>
<div class="t" style="top:30px;height:20px;line-height:20px;font-size:13px;color:#444;left:133.5px;width:400px;justify-content:center;">宏</div>
<div class="t" style="top:30px;height:20px;line-height:20px;font-size:13px;color:#444;left:175px;width:400px;justify-content:center;">帮助</div>
<svg style="position:absolute;left:1903.5px;top:34px" width="12" height="9" viewBox="0 0 12 9"><path d="M1.8 6.2L6 2l4.2 4.2a1.4 1.4 0 0 1-2 2L6 6 3.8 8.2a1.4 1.4 0 0 1-2-2z" fill="none" stroke="#334" stroke-width="1.2"/></svg>
<div style="left:0px;top:57px;width:1921px;height:120px;background:#f0f0f0;border-top:1px solid #dadada"></div>
<div style="left:0px;top:177px;width:1921px;height:1.5px;background:#fbfbfb"></div>
<div style="left:395px;top:60px;width:1px;height:114px;background:#e2e2e2"></div>
<svg style="position:absolute;left:27px;top:81px;overflow:visible" width="34" height="34" viewBox="0 0 34 34"><rect x="1" y="1" width="22" height="22" fill="#fff" stroke="#1e78d7" stroke-width="1.4"/><path d="M12 1v22M12 12h11" stroke="#1e78d7" stroke-width="1.3" fill="none"/><path d="M6.8 1v22M1 6.6h11M1 12h11M1 17.6h11" stroke="#1e78d7" stroke-width="1.1" fill="none" opacity=".85"/><path d="M4 1v17M1 3.8h6M1 9.3h6M1 14.8h6" stroke="#1e78d7" stroke-width="1" fill="none" opacity=".8"/><circle cx="22.5" cy="22.5" r="5.2" fill="#fff" stroke="#12b4e6" stroke-width="2"/><path d="M19.8 22.5h5.4" stroke="#12b4e6" stroke-width="1.8"/></svg>
<div class="t" style="top:122px;height:20px;line-height:20px;font-size:13px;color:#444;left:-160px;width:400px;justify-content:center;">网格清除</div>
<svg style="position:absolute;left:91px;top:81px;overflow:visible" width="34" height="34" viewBox="0 0 34 34"><rect x="1" y="1" width="22" height="22" fill="#fff" stroke="#1e78d7" stroke-width="1.4"/><path d="M12 1v22M12 12h11" stroke="#1e78d7" stroke-width="1.3" fill="none"/><path d="M6.8 1v22M1 6.6h11M1 12h11M1 17.6h11" stroke="#1e78d7" stroke-width="1.1" fill="none" opacity=".85"/><path d="M4 1v17M1 3.8h6M1 9.3h6M1 14.8h6" stroke="#1e78d7" stroke-width="1" fill="none" opacity=".8"/><circle cx="22.5" cy="22.5" r="5.2" fill="#fff" stroke="#12b4e6" stroke-width="2"/><path d="M25.5 22.5h-5M21.9 19.9l-2.6 2.6l2.6 2.6z" stroke="#12b4e6" stroke-width="1.6" fill="#12b4e6"/></svg>
<div class="t" style="top:122px;height:20px;line-height:20px;font-size:13px;color:#444;left:-96px;width:400px;justify-content:center;">网格导入</div>
<svg style="position:absolute;left:155px;top:81px;overflow:visible" width="34" height="34" viewBox="0 0 34 34"><rect x="1" y="1" width="22" height="22" fill="#fff" stroke="#1e78d7" stroke-width="1.4"/><path d="M12 1v22M12 12h11" stroke="#1e78d7" stroke-width="1.3" fill="none"/><path d="M6.8 1v22M1 6.6h11M1 12h11M1 17.6h11" stroke="#1e78d7" stroke-width="1.1" fill="none" opacity=".85"/><path d="M4 1v17M1 3.8h6M1 9.3h6M1 14.8h6" stroke="#1e78d7" stroke-width="1" fill="none" opacity=".8"/><circle cx="22.5" cy="22.5" r="5.2" fill="#fff" stroke="#12b4e6" stroke-width="2"/><path d="M19.5 22.5h5M23.1 19.9l2.6 2.6l-2.6 2.6z" stroke="#12b4e6" stroke-width="1.6" fill="#12b4e6"/></svg>
<div class="t" style="top:122px;height:20px;line-height:20px;font-size:13px;color:#444;left:-32px;width:400px;justify-content:center;">网格导出</div>
<svg style="position:absolute;left:220px;top:82.5px;overflow:visible" width="34" height="34" viewBox="0 0 34 34"><rect x="1" y="1" width="22" height="22" fill="#fff" stroke="#6aa6e8" stroke-width="1.4"/><path d="M12 1v22M12 12h11" stroke="#6aa6e8" stroke-width="1.3" fill="none"/><path d="M6.8 1v22M1 6.6h11M1 12h11M1 17.6h11" stroke="#6aa6e8" stroke-width="1.1" fill="none" opacity=".85"/><path d="M4 1v17M1 3.8h6M1 9.3h6M1 14.8h6" stroke="#12b4e6" stroke-width="1" fill="none" opacity=".8"/><path d="M2.5 1v22M1 3.8h6M1 6.6h6M1 9.3h6M1 12h6M1 14.8h6M1 17.6h6" stroke="#12b4e6" stroke-width="1.6" fill="none" opacity=".9"/></svg>
<div class="t" style="top:122px;height:20px;line-height:20px;font-size:13px;color:#444;left:32px;width:400px;justify-content:center;">网格生成</div>
<svg style="position:absolute;left:283px;top:81px;overflow:visible" width="34" height="34" viewBox="0 0 34 34"><rect x="1" y="1" width="22" height="22" fill="#fff" stroke="#1e78d7" stroke-width="1.4"/><path d="M12 1v22M12 12h11" stroke="#1e78d7" stroke-width="1.3" fill="none"/><path d="M6.8 1v22M1 6.6h11M1 12h11M1 17.6h11" stroke="#1e78d7" stroke-width="1.1" fill="none" opacity=".85"/><path d="M4 1v17M1 3.8h6M1 9.3h6M1 14.8h6" stroke="#1e78d7" stroke-width="1" fill="none" opacity=".8"/><circle cx="22.5" cy="22.5" r="5.2" fill="#fff" stroke="#12b4e6" stroke-width="2"/><circle cx="22.5" cy="22.5" r="2.4" fill="#12b4e6"/></svg>
<div class="t" style="top:122px;height:20px;line-height:20px;font-size:13px;color:#444;left:96px;width:400px;justify-content:center;">停止生成</div>
<svg style="position:absolute;left:347px;top:81px;overflow:visible" width="34" height="34" viewBox="0 0 34 34"><rect x="1" y="1" width="22" height="22" fill="#fff" stroke="#1e78d7" stroke-width="1.4"/><path d="M12 1v22M12 12h11" stroke="#1e78d7" stroke-width="1.3" fill="none"/><path d="M6.8 1v22M1 6.6h11M1 12h11M1 17.6h11" stroke="#1e78d7" stroke-width="1.1" fill="none" opacity=".85"/><path d="M4 1v17M1 3.8h6M1 9.3h6M1 14.8h6" stroke="#1e78d7" stroke-width="1" fill="none" opacity=".8"/><circle cx="21" cy="21" r="3.3" fill="#f0f0f0" stroke="#12b4e6" stroke-width="1.7"/><path d="M23.5 23.5l3 3" stroke="#12b4e6" stroke-width="2.2" stroke-linecap="round"/></svg>
<div class="t" style="top:122px;height:20px;line-height:20px;font-size:13px;color:#444;left:160px;width:400px;justify-content:center;">网格检查</div>
<div style="left:294px;top:180px;width:399px;height:23px;background:#dadada;border-top:1px solid #b4b4b4;border-bottom:1px solid #acacac"></div>
<div class="t" style="top:181.5px;height:20px;line-height:20px;font-size:13px;color:#000;left:300.5px;">边界条件</div>
<svg style="position:absolute;left:648px;top:185px" width="46" height="14" viewBox="0 0 46 14"><path d="M1.5 4l4.8 4.8l4.8-4.8" fill="none" stroke="#333" stroke-width="1.1"/><path d="M16.6 12l3.8-3.8M18 5.6l5 5M19.3 6.8l2.9-3l3 3l-2.9 3M21.5 2.8l4.2 4.2" fill="none" stroke="#2a2a2a" stroke-width="1.25"/><path d="M32 2.5l9 9M41 2.5l-9 9" stroke="#222" stroke-width="1.3"/></svg>
<div class="t" style="top:210.5px;height:20px;line-height:20px;font-size:13px;color:#000;left:303.5px;">边界条件</div>
<div style="left:303px;top:233px;width:382px;height:2px;background:#000"></div>
<div style="left:303px;top:245px;width:382px;height:553px;background:#fff;border:1px solid #8a8a8a;border-radius:4px"></div>
<div class="t" style="top:803.7px;height:20px;line-height:20px;font-size:13px;color:#000;left:302.5px;">ID</div>
<div style="left:303px;top:826px;width:382px;height:22px;background:#ebebeb;border:1px solid #8a8a8a"></div>
<div class="t" style="top:827.3px;height:20px;line-height:20px;font-size:13px;color:#8c8c8c;right:1240.5px;justify-content:flex-end;">0</div>
<div style="left:303px;top:858px;width:382px;height:1px;background:#000"></div>
<div style="left:303px;top:866px;width:188px;height:29px;background:#f0f0f0;border:1px solid #8a8a8a;border-radius:4px"></div>
<div class="t" style="top:870.5px;height:20px;line-height:20px;font-size:13px;color:#000;left:197px;width:400px;justify-content:center;">编辑</div>
<div style="left:497px;top:866px;width:188px;height:29px;background:#f0f0f0;border:1px solid #8a8a8a;border-radius:4px"></div>
<div class="t" style="top:870.5px;height:20px;line-height:20px;font-size:13px;color:#000;left:391px;width:400px;justify-content:center;">复制</div>
<div style="left:303px;top:901px;width:188px;height:29px;background:#f0f0f0;border:1px solid #8a8a8a;border-radius:4px"></div>
<div class="t" style="top:905.5px;height:20px;line-height:20px;font-size:13px;color:#000;left:197px;width:400px;justify-content:center;">参数</div>
<div style="left:497px;top:901px;width:188px;height:29px;background:#f0f0f0;border:1px solid #8a8a8a;border-radius:4px"></div>
<div class="t" style="top:905.5px;height:20px;line-height:20px;font-size:13px;color:#000;left:391px;width:400px;justify-content:center;">剖面图</div>
<div style="left:303px;top:936px;width:188px;height:29px;background:#f0f0f0;border:1px solid #8a8a8a;border-radius:4px"></div>
<div class="t" style="top:940.5px;height:20px;line-height:20px;font-size:13px;color:#000;left:197px;width:400px;justify-content:center;">显示网格</div>
<div style="left:497px;top:936px;width:188px;height:29px;background:#f0f0f0;border:1px solid #8a8a8a;border-radius:4px"></div>
<div class="t" style="top:940.5px;height:20px;line-height:20px;font-size:13px;color:#000;left:391px;width:400px;justify-content:center;">工作条件</div>
<div style="left:303px;top:971px;width:188px;height:29px;background:#f0f0f0;border:1px solid #8a8a8a;border-radius:4px"></div>
<div class="t" style="top:975.5px;height:20px;line-height:20px;font-size:13px;color:#000;left:197px;width:400px;justify-content:center;">多孔壁面</div>
<div style="left:497px;top:971px;width:188px;height:29px;background:#f0f0f0;border:1px solid #8a8a8a;border-radius:4px"></div>
<div class="t" style="top:975.5px;height:20px;line-height:20px;font-size:13px;color:#000;left:391px;width:400px;justify-content:center;">周期性边界条件</div>
<div style="left:303px;top:1007px;width:382px;height:1px;background:#000"></div>
<svg style="position:absolute;left:701px;top:182px" width="4" height="24" viewBox="0 0 4 24"><path d="M2 1v22" stroke="#a8a8a8" stroke-width="1.6" stroke-dasharray="1.6 2.4"/></svg>
<svg style="position:absolute;left:711px;top:183px" width="20" height="20" viewBox="0 0 20 20"><path d="M9.8 2.2v3M9.8 5l5.4 2.7v6.3l-5.4 3l-5.4-3v-6.3z" fill="#fff" stroke="#2a86e4" stroke-width="1.4" stroke-linejoin="round"/><path d="M4.4 7.7l5.4 2.9l5.4-2.9M9.8 10.6v6.4M4.4 14l-2.2 1.3M15.2 14l2.2 1.3" fill="none" stroke="#2a86e4" stroke-width="1.3"/><path d="M8 3l1.8-2l1.8 2zM.8 13.6l.6 2.9l2.7-.9zM18.8 13.6l-.6 2.9l-2.7-.9z" fill="#2a86e4"/></svg><svg style="position:absolute;left:739px;top:184px" width="18" height="18" viewBox="0 0 18 18"><path d="M13.7 3v10.6M3 13.6h10.7" fill="none" stroke="#12b4e6" stroke-width="1.5"/><path d="M11.5 4.3l2.2-3l2.2 3zM4.3 11.4l-3 2.2l3 2.2z" fill="#12b4e6"/><circle cx="13.7" cy="13.6" r="1.5" fill="#fff" stroke="#2a6fe0" stroke-width="1.1"/><text x="2.6" y="9.6" font-family="Liberation Sans,sans-serif" font-size="6.5" font-weight="bold" fill="#3b82e3" textLength="7.5" lengthAdjust="spacingAndGlyphs">+X</text></svg><svg style="position:absolute;left:766px;top:184px" width="18" height="18" viewBox="0 0 18 18"><path d="M4 3v10.6M4 13.6h10.7" fill="none" stroke="#12b4e6" stroke-width="1.5"/><path d="M1.8 4.3l2.2-3l2.2 3zM13.4 11.4l3 2.2l-3 2.2z" fill="#12b4e6"/><circle cx="4" cy="13.6" r="1.5" fill="#fff" stroke="#2a6fe0" stroke-width="1.1"/><text x="7.8" y="9.6" font-family="Liberation Sans,sans-serif" font-size="6.5" font-weight="bold" fill="#3b82e3" textLength="7.5" lengthAdjust="spacingAndGlyphs">−X</text></svg><svg style="position:absolute;left:793px;top:184px" width="18" height="18" viewBox="0 0 18 18"><path d="M4 3v10.6M4 13.6h10.7" fill="none" stroke="#12b4e6" stroke-width="1.5"/><path d="M1.8 4.3l2.2-3l2.2 3zM13.4 11.4l3 2.2l-3 2.2z" fill="#12b4e6"/><circle cx="4" cy="13.6" r="1.5" fill="#fff" stroke="#2a6fe0" stroke-width="1.1"/><text x="7.8" y="9.6" font-family="Liberation Sans,sans-serif" font-size="6.5" font-weight="bold" fill="#3b82e3" textLength="7.5" lengthAdjust="spacingAndGlyphs">+Y</text></svg><svg style="position:absolute;left:820px;top:184px" width="18" height="18" viewBox="0 0 18 18"><path d="M13.7 3v10.6M3 13.6h10.7" fill="none" stroke="#12b4e6" stroke-width="1.5"/><path d="M11.5 4.3l2.2-3l2.2 3zM4.3 11.4l-3 2.2l3 2.2z" fill="#12b4e6"/><circle cx="13.7" cy="13.6" r="1.5" fill="#fff" stroke="#2a6fe0" stroke-width="1.1"/><text x="2.6" y="9.6" font-family="Liberation Sans,sans-serif" font-size="6.5" font-weight="bold" fill="#3b82e3" textLength="7.5" lengthAdjust="spacingAndGlyphs">−Y</text></svg><svg style="position:absolute;left:847px;top:184px" width="18" height="18" viewBox="0 0 18 18"><path d="M13.7 3v10.6M3 13.6h10.7" fill="none" stroke="#12b4e6" stroke-width="1.5"/><path d="M11.5 4.3l2.2-3l2.2 3zM4.3 11.4l-3 2.2l3 2.2z" fill="#12b4e6"/><circle cx="13.7" cy="13.6" r="1.5" fill="#fff" stroke="#2a6fe0" stroke-width="1.1"/><text x="2.6" y="9.6" font-family="Liberation Sans,sans-serif" font-size="6.5" font-weight="bold" fill="#3b82e3" textLength="7.5" lengthAdjust="spacingAndGlyphs">+Z</text></svg><svg style="position:absolute;left:874px;top:184px" width="18" height="18" viewBox="0 0 18 18"><path d="M4 3v10.6M4 13.6h10.7" fill="none" stroke="#12b4e6" stroke-width="1.5"/><path d="M1.8 4.3l2.2-3l2.2 3zM13.4 11.4l3 2.2l-3 2.2z" fill="#12b4e6"/><circle cx="4" cy="13.6" r="1.5" fill="#fff" stroke="#2a6fe0" stroke-width="1.1"/><text x="7.8" y="9.6" font-family="Liberation Sans,sans-serif" font-size="6.5" font-weight="bold" fill="#3b82e3" textLength="7.5" lengthAdjust="spacingAndGlyphs">−Z</text></svg>
<div style="left:809px;top:210px;width:1112px;height:23px;background:#a0a0a0"></div>
<div style="left:698px;top:210px;width:110.5px;height:24px;background:#fff;border-left:1px solid #cfcfcf;border-top:1px solid #cfcfcf"></div>
<div class="t" style="top:212px;height:20px;line-height:20px;font-size:13px;color:#0a0a1e;left:710.8px;transform:scaleX(1.02);transform-origin:0 50%;">Untitled 0 *</div>
<svg style="position:absolute;left:781px;top:215px" width="14" height="14" viewBox="0 0 14 14"><rect x=".6" y=".6" width="12.8" height="12.8" rx="2" fill="#e5805a" stroke="#d8392b" stroke-width="1.2"/><path d="M4 4l6 6M10 4l-6 6" stroke="#fff" stroke-width="2"/></svg>
<div style="left:698px;top:233px;width:1220px;height:783px;background:#fff;border:1px solid #d4d4d4"></div>
<div style="left:700px;top:235px;width:1213px;height:1px;background:#dcdcdc"></div>
<div style="left:700px;top:235px;width:1px;height:780px;background:#dcdcdc"></div>
<svg id="vp" width="1210" height="755" viewBox="0 0 1210 755" style="position:absolute;left:702px;top:237px">
<title>3D mesh view</title>
<defs><linearGradient id="sky" x1="0" y1="0" x2="0" y2="1"><stop offset="0" stop-color="#0086ea"/><stop offset="1" stop-color="#ffffff"/></linearGradient></defs>
<rect width="1210" height="755" fill="url(#sky)"/>
<g shape-rendering="crispEdges" stroke="#000" stroke-width="1" fill="none">
<path d="M658 38.4L1062.5 271.5L1062.5 349.5L388.5 739.2L-16 506.1L-16 428.1Z" fill="#8a8a8a"/>
<path d="M658 38.4L1062.5 271.5 M590.6 77.4L995.1 310.5 M523.2 116.3L927.7 349.4 M455.8 155.3L860.3 388.4 M388.4 194.3L792.9 427.4 M321 233.2L725.5 466.4 M253.6 272.2L658.1 505.3 M186.2 311.2L590.7 544.3 M118.8 350.2L523.3 583.3 M51.4 389.1L455.9 622.2 M-16 428.1L388.5 661.2 M658 38.4L-16 428.1 M725.4 77.2L51.4 466.9 M792.8 116.1L118.8 505.8 M860.3 154.9L186.3 544.6 M927.7 193.8L253.7 583.5 M995.1 232.6L321.1 622.3 M1062.5 271.5L388.5 661.2 M624.3 135.7L894 291.1 M556.9 174.7L826.6 330.1 M489.5 213.6L759.2 369 M422.1 252.6L691.8 408 M354.7 291.6L624.4 447 M287.3 330.6L557 486 M219.9 369.5L489.6 524.9 M691.7 135.6L219.9 408.4 M759.1 174.5L287.3 447.3 M826.6 213.3L354.8 486.1 M894 252.2L422.2 525 M641.2 164.9L843.4 281.4 M607.5 184.4L809.7 300.9 M573.8 203.8L776 320.4 M540.1 223.3L742.3 339.9 M506.4 242.8L708.6 359.4 M472.7 262.3L674.9 378.8 M439 281.8L641.2 398.3 M405.3 301.3L607.5 417.8 M371.6 320.8L573.8 437.3 M337.9 340.2L540.1 456.8 M304.2 359.7L506.4 476.3 M270.5 379.2L472.7 495.8 M674.9 164.8L270.5 398.7 M708.6 184.3L304.2 418.1 M742.3 203.7L337.9 437.5 M776 223.1L371.6 456.9 M809.7 242.5L405.3 476.4 M843.4 262L439 495.8 M649.6 179.5L818.2 276.6 M632.8 189.2L801.3 286.3 M615.9 198.9L784.5 296.1 M599.1 208.7L767.6 305.8 M582.2 218.4L750.8 315.6 M565.4 228.2L733.9 325.3 M548.5 237.9L717.1 335 M531.7 247.7L700.2 344.8 M514.8 257.4L683.4 354.5 M498 267.1L666.5 364.3 M481.1 276.9L649.7 374 M464.3 286.6L632.8 383.7 M447.4 296.4L616 393.5 M430.6 306.1L599.1 403.2 M413.7 315.9L582.3 413 M396.9 325.6L565.4 422.7 M380 335.3L548.6 432.5 M363.2 345.1L531.7 442.2 M346.3 354.8L514.9 451.9 M329.5 364.6L498 461.7 M312.6 374.3L481.2 471.4 M295.8 384L464.3 481.2 M666.5 179.4L295.8 393.8 M683.3 189.2L312.6 403.5 M700.2 198.9L329.5 413.2 M717 208.6L346.3 422.9 M733.9 218.3L363.2 432.6 M750.7 228L380 442.3 M767.6 237.7L396.9 452.1 M784.4 247.4L413.7 461.8 M801.3 257.1L430.6 471.5 M818.2 266.9L447.5 481.2 M653.8 196.5L788.7 274.2 M645.4 201.3L780.2 279 M637 206.2L771.8 283.9 M628.6 211.1L763.4 288.8 M620.1 216L755 293.7 M611.7 220.8L746.5 298.5 M603.3 225.7L738.1 303.4 M594.9 230.6L729.7 308.3 M586.4 235.4L721.3 313.1 M578 240.3L712.8 318 M569.6 245.2L704.4 322.9 M561.2 250.1L696 327.8 M552.7 254.9L687.6 332.6 M544.3 259.8L679.1 337.5 M535.9 264.7L670.7 342.4 M527.5 269.5L662.3 347.2 M519 274.4L653.9 352.1 M510.6 279.3L645.4 357 M502.2 284.2L637 361.9 M493.8 289L628.6 366.7 M485.3 293.9L620.2 371.6 M476.9 298.8L611.7 376.5 M468.5 303.6L603.3 381.3 M460.1 308.5L594.9 386.2 M451.6 313.4L586.5 391.1 M443.2 318.3L578 396 M434.8 323.1L569.6 400.8 M426.4 328L561.2 405.7 M417.9 332.9L552.8 410.6 M409.5 337.7L544.3 415.4 M401.1 342.6L535.9 420.3 M392.7 347.5L527.5 425.2 M384.2 352.4L519.1 430.1 M375.8 357.2L510.6 434.9 M367.4 362.1L502.2 439.8 M359 367L493.8 444.7 M350.5 371.8L485.4 449.5 M342.1 376.7L476.9 454.4 M333.7 381.6L468.5 459.3 M325.3 386.5L460.1 464.2 M662.3 196.5L325.3 391.3 M670.7 201.3L333.7 396.2 M679.1 206.2L342.1 401 M687.5 211L350.5 405.9 M696 215.9L359 410.7 M704.4 220.7L367.4 415.6 M712.8 225.6L375.8 420.5 M721.2 230.5L384.2 425.3 M729.7 235.3L392.7 430.2 M738.1 240.2L401.1 435 M746.5 245L409.5 439.9 M755 249.9L418 444.7 M763.4 254.7L426.4 449.6 M771.8 259.6L434.8 454.4 M780.2 264.5L443.2 459.3 M788.7 269.3L451.7 464.2"/>
<path d="M1062.5 271.5L1062.5 349.5 M995.1 310.5L995.1 388.5 M927.7 349.4L927.7 427.4 M860.3 388.4L860.3 466.4 M792.9 427.4L792.9 505.4 M725.5 466.4L725.5 544.4 M658.1 505.3L658.1 583.3 M590.7 544.3L590.7 622.3 M523.3 583.3L523.3 661.3 M455.9 622.2L455.9 700.2 M388.5 661.2L388.5 739.2 M-16 428.1L-16 506.1 M51.4 466.9L51.4 544.9 M118.8 505.8L118.8 583.8 M186.3 544.6L186.3 622.6 M253.7 583.5L253.7 661.5 M321.1 622.3L321.1 700.3 M388.5 661.2L388.5 739.2 M1062.5 310.5L388.5 700.2 M-16 467.1L388.5 700.2 M1062.5 349.5L388.5 739.2 M-16 506.1L388.5 739.2"/>
</g>
<g shape-rendering="crispEdges"><ellipse cx="658.1" cy="271.9" rx="50.5" ry="30.5" fill="#000"/><path d="M638.1 237.9Q646.1 247.9 652.1 247.9H664.1Q670.1 247.9 678.1 237.9" fill="none" stroke="#8a8a8a" stroke-width="1" stroke-dasharray="2 1.5"/><path d="M638.1 243.5Q646.1 253.5 652.1 253.5H664.1Q670.1 253.5 678.1 243.5" fill="none" stroke="#8a8a8a" stroke-width="1" stroke-dasharray="2 1.5"/><path d="M638.1 249.1Q646.1 259.1 652.1 259.1H664.1Q670.1 259.1 678.1 249.1" fill="none" stroke="#8a8a8a" stroke-width="1" stroke-dasharray="2 1.5"/><path d="M638.1 254.7Q646.1 264.7 652.1 264.7H664.1Q670.1 264.7 678.1 254.7" fill="none" stroke="#8a8a8a" stroke-width="1" stroke-dasharray="2 1.5"/><path d="M638.1 260.3Q646.1 270.3 652.1 270.3H664.1Q670.1 270.3 678.1 260.3" fill="none" stroke="#8a8a8a" stroke-width="1" stroke-dasharray="2 1.5"/><path d="M638.1 265.9Q646.1 275.9 652.1 275.9H664.1Q670.1 275.9 678.1 265.9" fill="none" stroke="#8a8a8a" stroke-width="1" stroke-dasharray="2 1.5"/><path d="M638.1 271.5Q646.1 281.5 652.1 281.5H664.1Q670.1 281.5 678.1 271.5" fill="none" stroke="#8a8a8a" stroke-width="1" stroke-dasharray="2 1.5"/><path d="M638.1 277.1Q646.1 287.1 652.1 287.1H664.1Q670.1 287.1 678.1 277.1" fill="none" stroke="#8a8a8a" stroke-width="1" stroke-dasharray="2 1.5"/><path d="M638.1 282.7Q646.1 292.7 652.1 292.7H664.1Q670.1 292.7 678.1 282.7" fill="none" stroke="#8a8a8a" stroke-width="1" stroke-dasharray="2 1.5"/><path d="M638.1 288.3Q646.1 298.3 652.1 298.3H664.1Q670.1 298.3 678.1 288.3" fill="none" stroke="#8a8a8a" stroke-width="1" stroke-dasharray="2 1.5"/><path d="M616.1 249.9h14l6 3l6 6M700.1 249.9h-14l-6 3l-6 6" fill="none" stroke="#8a8a8a" stroke-width="1" stroke-dasharray="1 3"/><path d="M616.1 255.5h14l6 3l6 6M700.1 255.5h-14l-6 3l-6 6" fill="none" stroke="#8a8a8a" stroke-width="1" stroke-dasharray="1 3"/><path d="M616.1 261.1h14l6 3l6 6M700.1 261.1h-14l-6 3l-6 6" fill="none" stroke="#8a8a8a" stroke-width="1" stroke-dasharray="1 3"/><path d="M616.1 266.7h14l6 3l6 6M700.1 266.7h-14l-6 3l-6 6" fill="none" stroke="#8a8a8a" stroke-width="1" stroke-dasharray="1 3"/><path d="M616.1 272.3h14l6 3l6 6M700.1 272.3h-14l-6 3l-6 6" fill="none" stroke="#8a8a8a" stroke-width="1" stroke-dasharray="1 3"/><path d="M616.1 277.9h14l6 3l6 6M700.1 277.9h-14l-6 3l-6 6" fill="none" stroke="#8a8a8a" stroke-width="1" stroke-dasharray="1 3"/><path d="M616.1 283.5h14l6 3l6 6M700.1 283.5h-14l-6 3l-6 6" fill="none" stroke="#8a8a8a" stroke-width="1" stroke-dasharray="1 3"/><path d="M616.1 289.1h14l6 3l6 6M700.1 289.1h-14l-6 3l-6 6" fill="none" stroke="#8a8a8a" stroke-width="1" stroke-dasharray="1 3"/><path d="M616.1 294.7h14l6 3l6 6M700.1 294.7h-14l-6 3l-6 6" fill="none" stroke="#8a8a8a" stroke-width="1" stroke-dasharray="1 3"/></g>
<g><path d="M99.9 652.6L66.9 671.6" stroke="#0000cc" stroke-width="6.5"/><path d="M57 677.6L71.6 677.8L63 665z" fill="#0000f0"/><path d="M99.9 652.6L132.9 671.6" stroke="#00a800" stroke-width="6.5"/><path d="M143 677.6L128.4 677.8L137 665z" fill="#00e000"/><path d="M99.9 653.6V614.6" stroke="#cc0000" stroke-width="6.5"/><path d="M99.9 603.8l7 8.5v3.5h-14v-3.5z" fill="#ff0000"/><text x="99.4" y="602.1" font-family="Liberation Sans, sans-serif" font-style="italic" font-size="14.5" text-anchor="middle" fill="#000" stroke="#000" stroke-width=".7">Z</text><text x="98.3" y="601" font-family="Liberation Sans, sans-serif" font-style="italic" font-size="14.5" text-anchor="middle" fill="#fff" stroke="#fff" stroke-width=".5">Z</text><text x="64.4" y="653.6" font-family="Liberation Sans, sans-serif" font-style="italic" font-size="14.5" text-anchor="middle" fill="#000" stroke="#000" stroke-width=".7">X</text><text x="63.3" y="652.5" font-family="Liberation Sans, sans-serif" font-style="italic" font-size="14.5" text-anchor="middle" fill="#fff" stroke="#fff" stroke-width=".5">X</text><text x="145.1" y="661.1" font-family="Liberation Sans, sans-serif" font-style="italic" font-size="14.5" text-anchor="middle" fill="#000" stroke="#000" stroke-width=".7">Y</text><text x="144" y="660" font-family="Liberation Sans, sans-serif" font-style="italic" font-size="14.5" text-anchor="middle" fill="#fff" stroke="#fff" stroke-width=".5">Y</text></g>
</svg>
<div style="left:1912px;top:235px;width:2px;height:759px;background:#e6e6e6"></div>
<div style="left:702px;top:992px;width:1212px;height:1px;background:#e6e6e6"></div>
<div style="left:740px;top:994px;width:1176px;height:19px;background:#a0a0a0"></div>
<div class="t" style="top:993.1px;height:20px;line-height:20px;font-size:13px;color:#000;left:520px;width:400px;justify-content:center;">3D</div>
<div style="left:1918px;top:233px;width:3px;height:783px;background:#f0f0f0"></div>
<div style="left:1920px;top:233px;width:1px;height:783px;background:#dadada"></div>
<div style="left:1919.5px;top:0px;width:1.5px;height:210px;background:#6f6f6f"></div>
<div style="left:1920px;top:1016px;width:1px;height:25px;background:#555"></div>
<div style="left:303px;top:267px;width:2px;height:420px;background:#5c5c5c"></div>
<div style="left:303px;top:710px;width:2px;height:25px;background:#5c5c5c"></div>
<div style="left:303px;top:772px;width:2px;height:22px;background:#5c5c5c"></div>
<div style="left:305px;top:246px;width:746px;height:546px;background:#fdfdfd;box-shadow:0 0 2.5px .5px rgba(0,0,0,.42)"></div>
<svg style="position:absolute;left:311px;top:252.5px" width="18" height="18" viewBox="0 0 18 18"><rect x="1" y="1" width="16" height="16" rx="1.5" fill="#fff" stroke="#29b6f0" stroke-width="1.3"/><path d="M9 1v16M1 9h16" stroke="#3a8ee6" stroke-width="1.3"/></svg>
<div class="t" style="top:249.5px;height:20px;line-height:20px;font-size:13px;color:#000;left:339.5px;">速度入口</div>
<svg style="position:absolute;left:1017px;top:252px" width="19" height="19" viewBox="0 0 19 19"><path d="M1.5 1.5l16 16M17.5 1.5l-16 16" stroke="#1c2230" stroke-width="1.7"/></svg>
<div style="left:317px;top:298px;width:358px;height:42px;border:1px solid #8e8e8e"></div>
<div style="left:326.5px;top:290px;width:56px;height:16px;background:#fcfcfc"></div>
<div class="t" style="top:287.7px;height:20px;line-height:20px;font-size:13px;color:#000;left:328.5px;">边界名称</div>
<div style="left:327px;top:308px;width:338px;height:22px;background:#fff;border:1px solid #7a7a7a"></div>
<div class="t" style="top:309.3px;height:20px;line-height:20px;font-size:13px;color:#000;right:1260.5px;justify-content:flex-end;transform:scaleX(0.93);transform-origin:100% 50%;">X_MIN</div>
<div style="left:317px;top:367px;width:722px;height:369.5px;border:1px solid #8e8e8e"></div>
<div style="left:368.5px;top:348px;width:35.5px;height:19px;background:#f0f0f0;border:1px solid #d9d9d9;border-bottom:none"></div>
<div class="t" style="top:347px;height:20px;line-height:20px;font-size:13px;color:#000;left:185.25px;width:400px;justify-content:center;">热</div>
<div style="left:403px;top:348px;width:51.5px;height:19px;background:#f0f0f0;border:1px solid #d9d9d9;border-bottom:none"></div>
<div class="t" style="top:347px;height:20px;line-height:20px;font-size:13px;color:#9a9a9a;left:227.75px;width:400px;justify-content:center;">辐射</div>
<div style="left:453.5px;top:348px;width:49.5px;height:19px;background:#f0f0f0;border:1px solid #d9d9d9;border-bottom:none"></div>
<div class="t" style="top:347px;height:20px;line-height:20px;font-size:13px;color:#9a9a9a;left:277.25px;width:400px;justify-content:center;">组分</div>
<div style="left:317px;top:346px;width:52px;height:22px;background:#fcfcfc;border:1px solid #d9d9d9;border-bottom:none"></div>
<div class="t" style="top:346.5px;height:20px;line-height:20px;font-size:13px;color:#000;left:141.5px;width:400px;justify-content:center;">动量</div>
<div style="left:327px;top:384px;width:348px;height:77px;border:1px solid #8e8e8e"></div>
<div style="left:337px;top:376px;width:82px;height:16px;background:#fcfcfc"></div>
<div class="t" style="top:373.7px;height:20px;line-height:20px;font-size:13px;color:#000;left:339px;">速度定义方法</div>
<div style="left:337px;top:409px;width:328px;height:27px;background:#fff;border:1px solid #8a8a8a;border-radius:4px"></div>
<div class="t" style="top:412.5px;height:20px;line-height:20px;font-size:13px;color:#000;left:341.5px;">速度分量</div>
<svg style="position:absolute;left:651.5px;top:419.5px" width="9" height="7" viewBox="0 0 9 7"><path d="M4.5 6L1 2.8A1.3 1.3 0 0 1 3 1.2L4.5 2.6L6 1.2A1.3 1.3 0 0 1 8 2.8z" fill="#fff" stroke="#444" stroke-width=".9"/></svg>
<div style="left:681px;top:384px;width:348px;height:77px;border:1px solid #8e8e8e"></div>
<div style="left:691.5px;top:376px;width:92px;height:16px;background:#fcfcfc"></div>
<div class="t" style="top:373.7px;height:20px;line-height:20px;font-size:13px;color:#000;left:693.5px;">速度大小<i class="sp1"></i>[ m/s ]</div>
<div style="left:691px;top:411px;width:328px;height:22px;background:#ebebeb;border:1px solid #8a8a8a"></div>
<div class="t" style="top:412.3px;height:20px;line-height:20px;font-size:13px;color:#8c8c8c;right:906.5px;justify-content:flex-end;">1.0</div>
<div style="left:327px;top:474px;width:348px;height:162px;border:1px solid #8e8e8e"></div>
<div style="left:337px;top:466px;width:56px;height:16px;background:#fcfcfc"></div>
<div class="t" style="top:463.7px;height:20px;line-height:20px;font-size:13px;color:#000;left:339px;">速度分量</div>
<div style="left:681px;top:474px;width:348px;height:162px;border:1px solid #8e8e8e"></div>
<div style="left:691.5px;top:466px;width:56px;height:16px;background:#fcfcfc"></div>
<div class="t" style="top:463.7px;height:20px;line-height:20px;font-size:13px;color:#000;left:693.5px;">速度方向</div>
<div class="t" style="top:500.8px;height:20px;line-height:20px;font-size:13px;color:#000;left:337px;transform:scaleX(0.98);transform-origin:0 50%;">X 方向速度 [ m/s ]</div>
<div style="left:446px;top:500px;width:219px;height:22px;background:#fff;border:1px solid #7a7a7a"></div>
<div class="t" style="top:501.3px;height:20px;line-height:20px;font-size:13px;color:#000;right:1260.5px;justify-content:flex-end;">1.0</div>
<div class="t" style="top:500.8px;height:20px;line-height:20px;font-size:13px;color:#000;left:691px;transform:scaleX(0.975);transform-origin:0 50%;">X 方向分量</div>
<div style="left:760px;top:500px;width:259px;height:22px;background:#ebebeb;border:1px solid #8a8a8a"></div>
<div class="t" style="top:501.3px;height:20px;line-height:20px;font-size:13px;color:#8c8c8c;right:906.5px;justify-content:flex-end;">1.0</div>
<div class="t" style="top:544.8px;height:20px;line-height:20px;font-size:13px;color:#000;left:337px;transform:scaleX(0.98);transform-origin:0 50%;">Y 方向速度 [ m/s ]</div>
<div style="left:446px;top:544px;width:219px;height:22px;background:#fff;border:1px solid #7a7a7a"></div>
<div class="t" style="top:545.3px;height:20px;line-height:20px;font-size:13px;color:#000;right:1260.5px;justify-content:flex-end;">0.0</div>
<div class="t" style="top:544.8px;height:20px;line-height:20px;font-size:13px;color:#000;left:691px;transform:scaleX(0.975);transform-origin:0 50%;">Y 方向分量</div>
<div style="left:760px;top:544px;width:259px;height:22px;background:#ebebeb;border:1px solid #8a8a8a"></div>
<div class="t" style="top:545.3px;height:20px;line-height:20px;font-size:13px;color:#8c8c8c;right:906.5px;justify-content:flex-end;">0.0</div>
<div class="t" style="top:588.8px;height:20px;line-height:20px;font-size:13px;color:#000;left:337px;transform:scaleX(0.98);transform-origin:0 50%;">Z 方向速度 [ m/s ]</div>
<div style="left:446px;top:588px;width:219px;height:22px;background:#fff;border:1px solid #7a7a7a"></div>
<div class="t" style="top:589.3px;height:20px;line-height:20px;font-size:13px;color:#000;right:1260.5px;justify-content:flex-end;">0.0</div>
<div class="t" style="top:588.8px;height:20px;line-height:20px;font-size:13px;color:#000;left:691px;transform:scaleX(0.975);transform-origin:0 50%;">Z 方向分量</div>
<div style="left:760px;top:588px;width:259px;height:22px;background:#ebebeb;border:1px solid #8a8a8a"></div>
<div class="t" style="top:589.3px;height:20px;line-height:20px;font-size:13px;color:#8c8c8c;right:906.5px;justify-content:flex-end;">0.0</div>
<div style="left:327px;top:649px;width:348px;height:77px;border:1px solid #8e8e8e"></div>
<div style="left:337px;top:641px;width:142px;height:16px;background:#fcfcfc"></div>
<div class="t" style="top:638.7px;height:20px;line-height:20px;font-size:13px;color:#000;left:339px;">超音速/初始化表压<i class="sp1"></i>[ Pa ]</div>
<div style="left:337px;top:676px;width:328px;height:22px;background:#fff;border:1px solid #7a7a7a"></div>
<div class="t" style="top:677.3px;height:20px;line-height:20px;font-size:13px;color:#000;right:1260.5px;justify-content:flex-end;">0</div>
<div style="left:681px;top:649px;width:348px;height:77px;border:1px solid #8e8e8e"></div>
<div style="left:691.5px;top:641px;width:43px;height:16px;background:#fcfcfc"></div>
<div class="t" style="top:638.7px;height:20px;line-height:20px;font-size:13px;color:#000;left:693.5px;">参考系</div>
<div style="left:691px;top:674px;width:328px;height:27px;background:#fff;border:1px solid #8a8a8a;border-radius:4px"></div>
<div class="t" style="top:677.5px;height:20px;line-height:20px;font-size:13px;color:#000;left:695.5px;">绝对参考系</div>
<svg style="position:absolute;left:1005.5px;top:684.5px" width="9" height="7" viewBox="0 0 9 7"><path d="M4.5 6L1 2.8A1.3 1.3 0 0 1 3 1.2L4.5 2.6L6 1.2A1.3 1.3 0 0 1 8 2.8z" fill="#fff" stroke="#444" stroke-width=".9"/></svg>
<div style="left:317px;top:743px;width:722px;height:1px;background:#000"></div>
<div style="left:570px;top:751px;width:68px;height:29px;background:#fcfcfc;border:1px solid #8a8a8a;border-radius:4px"></div>
<div class="t" style="top:755.5px;height:20px;line-height:20px;font-size:13px;color:#000;left:404px;width:400px;justify-content:center;">确认</div>
<div style="left:644px;top:751px;width:68px;height:29px;background:#fcfcfc;border:1px solid #8a8a8a;border-radius:4px"></div>
<div class="t" style="top:755.5px;height:20px;line-height:20px;font-size:13px;color:#000;left:478px;width:400px;justify-content:center;">关闭</div>
<div style="left:718px;top:751px;width:68px;height:29px;background:#fcfcfc;border:1px solid #8a8a8a;border-radius:4px"></div>
<div class="t" style="top:755.5px;height:20px;line-height:20px;font-size:13px;color:#000;left:552px;width:400px;justify-content:center;">帮助</div>
</body></html>
